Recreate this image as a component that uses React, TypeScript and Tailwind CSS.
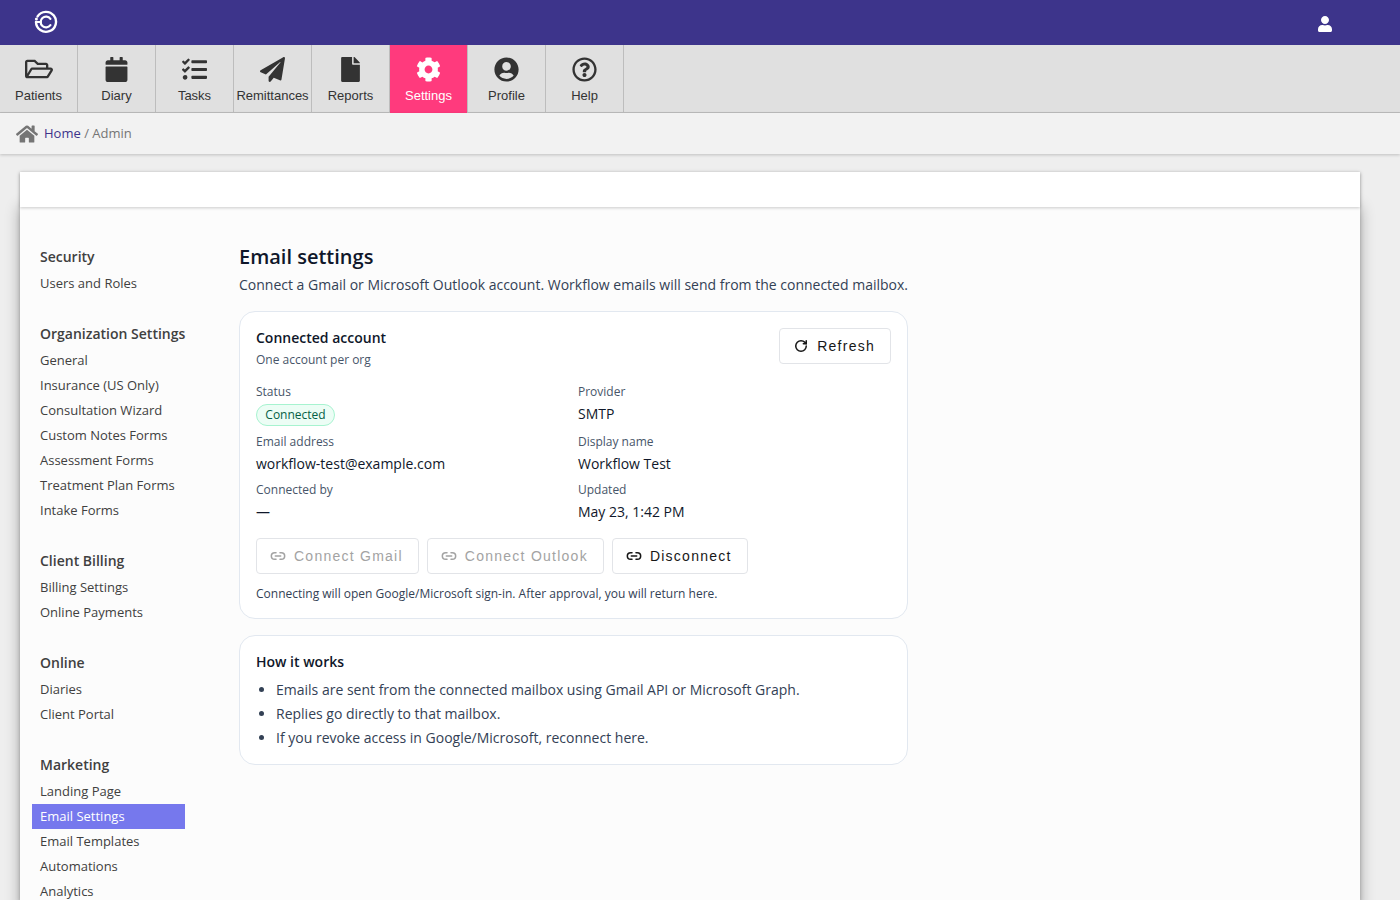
import { FaRegFolderOpen, FaCalendar, FaTasks, FaPaperPlane, FaFile, FaCog, FaUserCircle, FaRegQuestionCircle, FaHome, FaUser } from "react-icons/fa";
import { Link2, RotateCw } from "lucide-react";

const navItems = [
  { label: "Patients", icon: FaRegFolderOpen, size: 28 },
  { label: "Diary", icon: FaCalendar, size: 25 },
  { label: "Tasks", icon: FaTasks, size: 25 },
  { label: "Remittances", icon: FaPaperPlane, size: 25 },
  { label: "Reports", icon: FaFile, size: 25 },
  { label: "Settings", icon: FaCog, size: 25, active: true },
  { label: "Profile", icon: FaUserCircle, size: 25 },
  { label: "Help", icon: FaRegQuestionCircle, size: 25 },
];

const sideGroups = [
  { title: "Security", items: ["Users and Roles"] },
  {
    title: "Organization Settings",
    items: ["General", "Insurance (US Only)", "Consultation Wizard", "Custom Notes Forms", "Assessment Forms", "Treatment Plan Forms", "Intake Forms"],
  },
  { title: "Client Billing", items: ["Billing Settings", "Online Payments"] },
  { title: "Online", items: ["Diaries", "Client Portal"] },
  { title: "Marketing", items: ["Landing Page", "Email Settings", "Email Templates", "Automations", "Analytics"] },
];

function Logo() {
  return (
    <svg width="24" height="24" viewBox="0 0 24 24" fill="none" stroke="white" strokeLinecap="round">
      <path d="M3.6 6.4A10 10 0 1 1 2 12" strokeWidth="2.4" />
      <circle cx="2.4" cy="9" r="1.5" fill="white" stroke="none" />
      <path d="M16.4 8.8A5.4 5.4 0 1 0 16.4 15.2" strokeWidth="2.2" />
      <path d="M3 12h4" strokeWidth="2" />
    </svg>
  );
}

function Field({ label, className, children }: { label: string; className: string; children: React.ReactNode }) {
  return (
    <div className={className}>
      <div className="text-[12px] leading-[16px] text-[#475569]">{label}</div>
      <div className="mt-[2px] text-[14px] leading-[24px] text-[#0f172a]">{children}</div>
    </div>
  );
}

function ActionButton({ label, disabled, icon }: { label: string; disabled?: boolean; icon?: React.ReactNode }) {
  return (
    <button
      className={`flex h-[36px] items-center gap-[8px] rounded-[4px] border border-[#e2e4e8] bg-white pl-[13px] pr-[15px] font-['Liberation_Sans',sans-serif] text-[14px] tracking-[1.25px] ${
        disabled ? "text-[#a3a3a3]" : "text-[#171717]"
      }`}
    >
      {icon ?? <Link2 size={16} strokeWidth={2.3} />}
      {label}
    </button>
  );
}

export default function App() {
  return (
    <div className="flex h-screen flex-col overflow-hidden bg-[#eeeeee] font-['Open_Sans',sans-serif]">
      <header className="flex h-[45px] shrink-0 items-center justify-between bg-[#3d348b] pl-[34px] pr-[67px]">
        <div className="mb-[2px]">
          <Logo />
        </div>
        <div className="mt-[3px]">
          <FaUser size={16} color="white" />
        </div>
      </header>

      <nav className="flex h-[68px] shrink-0 border-b border-[#bdbdbd] bg-[#e0e0e0]">
        {navItems.map((item) => (
          <div
            key={item.label}
            className={`flex h-[68px] w-[78px] flex-col items-center border-r border-[#bdbdbd] font-['Liberation_Sans',sans-serif] text-[13px] ${
              item.active ? "bg-[#ff3a7d] text-white" : "text-[#333333]"
            }`}
          >
            <div className="mt-[11.5px] flex h-[25px] items-center justify-center">
              <item.icon size={item.size} />
            </div>
            <div className="mt-[4.5px] whitespace-nowrap leading-[20px]">{item.label}</div>
          </div>
        ))}
      </nav>

      <div className="z-10 flex h-[41px] shrink-0 items-center gap-[6px] bg-[#f2f2f2] pl-[16px] text-[13px] text-[#757575] shadow-[0_1px_3px_rgba(0,0,0,0.2)]">
        <FaHome size={22} color="#757575" />
        <div>
          <span className="text-[#3d348b]">Home</span> / Admin
        </div>
      </div>

      <div className="ml-[20px] mr-[40px] mt-[18px] flex min-h-0 flex-1 flex-col shadow-[0_1px_4px_rgba(0,0,0,0.25)]">
        <div className="z-10 h-[35px] shrink-0 bg-white shadow-[0_1px_3px_rgba(0,0,0,0.2)]"></div>

        <div className="flex flex-1 bg-[#fcfcfc] pt-[37px] shadow-[0_0_14px_rgba(0,0,0,0.3)]">
          <aside className="ml-[12px] w-[153px] shrink-0">
            {sideGroups.map((group) => (
              <div key={group.title} className="mb-[25px]">
                <div className="mb-[1px] whitespace-nowrap pl-[8px] text-[14px] font-semibold leading-[26px] text-[#404040]">{group.title}</div>
                {group.items.map((name) => (
                  <div
                    key={name}
                    className={`h-[25px] whitespace-nowrap pl-[8px] text-[13px] leading-[25px] ${
                      name === "Email Settings" ? "bg-[#7678ed] text-white" : "text-[#404040]"
                    }`}
                  >
                    {name}
                  </div>
                ))}
              </div>
            ))}
          </aside>

          <main className="ml-[54px] w-[669px]">
            <h1 className="text-[20px] font-semibold leading-[26px] text-[#0f172a]">Email settings</h1>
            <p className="mt-[5px] whitespace-nowrap text-[14px] leading-[20px] text-[#334155]">
              Connect a Gmail or Microsoft Outlook account. Workflow emails will send from the connected mailbox.
            </p>

            <section className="mt-[16px] h-[308px] rounded-[16px] border border-[#e2e8f0] bg-white px-[16px] pt-[16px]">
              <div className="flex justify-between">
                <div>
                  <div className="text-[14px] font-semibold leading-[20px] text-[#0f172a]">Connected account</div>
                  <div className="mt-[2px] text-[12px] leading-[20px] text-[#475569]">One account per org</div>
                </div>
                <ActionButton
                  label="Refresh"
                  icon={
                    <span className="flex w-[16px] justify-center">
                      <RotateCw size={14} strokeWidth={2.6} />
                    </span>
                  }
                />
              </div>

              <div className="mt-[14px] grid grid-cols-2 gap-x-[9px]">
                <div className="h-[50px]">
                  <div className="text-[12px] leading-[16px] text-[#475569]">Status</div>
                  <span className="mt-[4px] inline-block h-[22px] w-[79px] rounded-full border border-[#a7f3d0] bg-[#ecfdf5] text-center text-[12px] leading-[20px] text-[#065f46]">
                    Connected
                  </span>
                </div>
                <Field label="Provider" className="h-[50px]">SMTP</Field>
                <Field label="Email address" className="h-[48px]">workflow-test@example.com</Field>
                <Field label="Display name" className="h-[48px]">Workflow Test</Field>
                <Field label="Connected by" className="h-[49px]">—</Field>
                <Field label="Updated" className="h-[49px]">May 23, 1:42 PM</Field>
              </div>

              <div className="mt-[7px] flex gap-[8px]">
                <ActionButton label="Connect Gmail" disabled />
                <ActionButton label="Connect Outlook" disabled />
                <ActionButton label="Disconnect" />
              </div>
              <p className="mt-[10px] whitespace-nowrap text-[12px] leading-[20px] text-[#334155]">
                Connecting will open Google/Microsoft sign-in. After approval, you will return here.
              </p>
            </section>

            <section className="mt-[16px] h-[130px] rounded-[16px] border border-[#e2e8f0] bg-white px-[16px] pt-[16px]">
              <div className="text-[14px] font-semibold leading-[20px] text-[#0f172a]">How it works</div>
              <ul className="mt-[6px] list-disc pl-[20px] text-[14px] leading-[24px] text-[#334155]">
                <li>Emails are sent from the connected mailbox using Gmail API or Microsoft Graph.</li>
                <li>Replies go directly to that mailbox.</li>
                <li>If you revoke access in Google/Microsoft, reconnect here.</li>
              </ul>
            </section>
          </main>
        </div>
      </div>
    </div>
  );
}
